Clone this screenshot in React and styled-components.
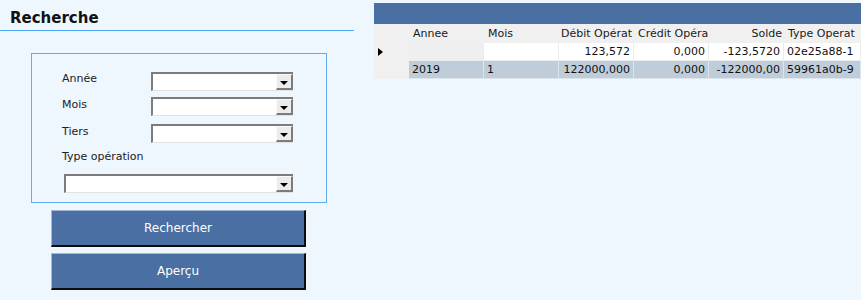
import React from 'react';
import styled, { createGlobalStyle } from 'styled-components';

const GlobalStyle = createGlobalStyle`
  html, body {
    margin: 0;
    padding: 0;
    background: #eef6fe;
  }
  body {
    font-family: "DejaVu Sans", Verdana, sans-serif;
    font-size: 11px;
    color: #1a1a1a;
  }
`;

const Page = styled.div`
  display: flex;
  align-items: flex-start;
  min-height: 300px;
  background: #eef6fe;
`;

const SearchPanel = styled.div`
  width: 354px;
  flex: none;
`;

const Title = styled.h2`
  margin: 0;
  padding: 8px 0 2px 10px;
  height: 20px;
  line-height: 20px;
  font-size: 15px;
  font-weight: bold;
  color: #111;
  border-bottom: 1px solid #4ea4f4;
`;

const FilterBox = styled.div`
  box-sizing: border-box;
  margin: 22px 0 0 31px;
  width: 296px;
  height: 150px;
  border: 1px solid #5eacf2;
  padding: 18px 0 0 30px;
`;

const FieldRow = styled.div`
  display: flex;
  align-items: flex-start;
  margin-top: ${p => p.$gap || 0}px;
`;

const Label = styled.div`
  width: ${p => (p.$wide ? 'auto' : '89px')};
  padding-top: ${p => p.$offset || 0}px;
  line-height: 14px;
  color: #222;
`;

const Combo = styled.div`
  box-sizing: border-box;
  display: flex;
  width: ${p => p.$width}px;
  height: 19px;
  margin-left: ${p => p.$indent || 0}px;
  background: #fff;
  border-top: 2px solid #7c7c7c;
  border-left: 2px solid #7c7c7c;
  border-bottom: 1px solid #e2e2e2;
`;

const ComboText = styled.div`
  flex: 1;
`;

const ComboArrow = styled.div`
  box-sizing: border-box;
  width: 17px;
  height: 16px;
  display: flex;
  align-items: center;
  justify-content: center;
  background: #ececec;
  border-top: 1px solid #fafafa;
  border-left: 1px solid #fafafa;
  border-right: 2px solid #7c7c7c;
  border-bottom: 2px solid #7c7c7c;

  &::after {
    content: '';
    margin-top: 2px;
    border-left: 4px solid transparent;
    border-right: 4px solid transparent;
    border-top: 4px solid #000;
  }
`;

const ActionButton = styled.button`
  box-sizing: border-box;
  display: block;
  width: 255px;
  height: 37px;
  margin: ${p => p.$gap}px 0 0 51px;
  padding: 0;
  background: #4a6fa3;
  color: #fff;
  font-family: "DejaVu Sans", Verdana, sans-serif;
  font-size: 12px;
  border-top: 1px solid #a3b6d3;
  border-left: 1px solid #a3b6d3;
  border-right: 2px solid #0c0c0c;
  border-bottom: 2px solid #0c0c0c;
  cursor: pointer;
`;

const GridPanel = styled.div`
  flex: 1;
  margin: 3px 0 0 20px;
  overflow: hidden;
`;

const GridBar = styled.div`
  height: 21px;
  background: #4a6fa3;
`;

const GridTable = styled.div`
  display: grid;
  grid-template-columns: 35px repeat(5, 75px) 1fr;
  grid-template-rows: 19px 18px 18px;
`;

const HeadCell = styled.div`
  background: #f0f0f0;
  line-height: 19px;
  padding: 0 ${p => (p.$right ? '2px' : '0')} 0 ${p => (p.$right ? '0' : '4px')};
  text-align: ${p => (p.$right ? 'right' : 'left')};
  white-space: nowrap;
  overflow: hidden;
  color: #1a1a1a;
`;

const RowHead = styled.div`
  background: #f0f0f0;
  display: flex;
  align-items: center;
  padding-left: 4px;
  height: 18px;

  &::before {
    content: '';
    display: ${p => (p.$current ? 'block' : 'none')};
    margin-top: -1px;
    border-top: 4px solid transparent;
    border-bottom: 4px solid transparent;
    border-left: 5px solid #000;
  }
`;

const Cell = styled.div`
  box-sizing: border-box;
  height: 18px;
  line-height: 17px;
  padding: 0 3px;
  text-align: ${p => (p.$right ? 'right' : 'left')};
  white-space: nowrap;
  overflow: hidden;
  background: ${p => (p.$tone === 'alt' ? '#bfccda' : p.$tone === 'focus' ? '#efefef' : '#fff')};
  border-right: 1px solid ${p => (p.$tone === 'alt' ? '#dde4ec' : '#ececec')};
  border-bottom: 1px solid ${p => (p.$tone === 'alt' ? '#dde4ec' : '#ececec')};
  color: #111;
`;

const columns = [
  { title: 'Annee' },
  { title: 'Mois' },
  { title: 'Débit Opérat', right: true },
  { title: 'Crédit Opéra' },
  { title: 'Solde', right: true },
  { title: 'Type Operat' },
];

const rows = [
  { current: true, cells: ['', '', '123,572', '0,000', '-123,5720', '02e25a88-1'] },
  { cells: ['2019', '1', '122000,000', '0,000', '-122000,00', '59961a0b-9'] },
];

const numericCols = [2, 3, 4];

const App = () => {
  return (
    <Page>
      <GlobalStyle />
      <SearchPanel>
        <Title>Recherche</Title>
        <FilterBox>
          <FieldRow>
            <Label $offset={0}>Année</Label>
            <Combo $width={142}><ComboText /><ComboArrow /></Combo>
          </FieldRow>
          <FieldRow $gap={6}>
            <Label $offset={1}>Mois</Label>
            <Combo $width={142}><ComboText /><ComboArrow /></Combo>
          </FieldRow>
          <FieldRow $gap={8}>
            <Label $offset={1}>Tiers</Label>
            <Combo $width={142}><ComboText /><ComboArrow /></Combo>
          </FieldRow>
          <FieldRow $gap={7}>
            <Label $wide>Type opération</Label>
          </FieldRow>
          <FieldRow $gap={10}>
            <Combo $width={229} $indent={2}><ComboText /><ComboArrow /></Combo>
          </FieldRow>
        </FilterBox>
        <ActionButton $gap={7}>Rechercher</ActionButton>
        <ActionButton $gap={6}>Aperçu</ActionButton>
      </SearchPanel>

      <GridPanel>
        <GridBar />
        <GridTable>
          <HeadCell />
          {columns.map(c => (
            <HeadCell key={c.title} $right={c.right}>{c.title}</HeadCell>
          ))}
          {rows.map((r, i) => (
            <React.Fragment key={i}>
              <RowHead $current={r.current} />
              {r.cells.map((v, j) => (
                <Cell
                  key={j}
                  $right={numericCols.includes(j)}
                  $tone={i === 1 ? 'alt' : r.current && j === 0 ? 'focus' : 'plain'}
                >
                  {v}
                </Cell>
              ))}
            </React.Fragment>
          ))}
        </GridTable>
      </GridPanel>
    </Page>
  );
};

export default App;
